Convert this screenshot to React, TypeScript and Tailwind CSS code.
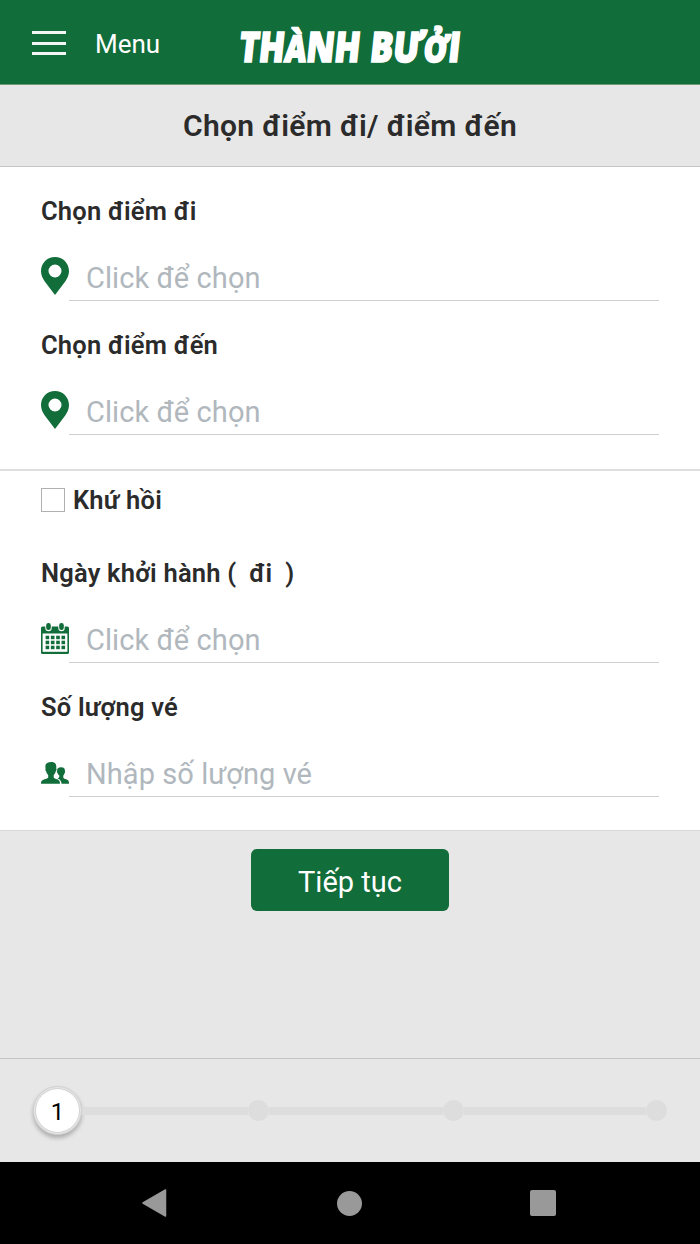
import type { ReactNode } from "react";

function PinIcon() {
  return (
    <svg width="28" height="38" viewBox="0 0 28 38" className="mb-px block">
      <path
        fillRule="evenodd"
        fill="#116d39"
        d="M14 0C6.200 0 0 6.200 0 14c0 4 1.500 7 3.600 10.200L14 38l10.400-13.800C26.500 21 28 18 28 14 28 6.200 21.800 0 14 0Zm0 7.500a6.500 6.500 0 1 1 0 13 6.500 6.500 0 0 1 0-13Z"
      />
    </svg>
  );
}

function CalendarIcon() {
  const columns = [4.600, 9.900, 15.200, 20.500];
  const rows = [12.700, 17.700, 22.700];
  return (
    <svg width="28" height="32" viewBox="0 0 28 32" className="mt-px block">
      <rect x="0" y="3.500" width="28" height="27.500" rx="1.600" fill="#116d39" />
      <rect x="1.600" y="10.500" width="24.800" height="18.300" fill="#fff" />
      <rect x="4.300" y="-1" width="6.400" height="9.200" rx="3.200" fill="#fff" />
      <rect x="17.300" y="-1" width="6.400" height="9.200" rx="3.200" fill="#fff" />
      <rect x="5.200" y="0" width="4.600" height="7" rx="2.200" fill="#116d39" />
      <rect x="18.200" y="0" width="4.600" height="7" rx="2.200" fill="#116d39" />
      {rows.map((y) =>
        columns.map((x) => (
          <rect key={`${x}-${y}`} x={x} y={y} width="3.600" height="3.500" fill="#116d39" />
        )),
      )}
    </svg>
  );
}

function PeopleIcon() {
  return (
    <svg width="28" height="22" viewBox="0 0 28 22" className="block">
      <g fill="#116d39">
        <path d="M5 2C6 .7 7.800 0 10 0c3.200 0 5.400 1.300 5.300 4.500v2c.5 .8 .2 2.400-.6 2.900-.3 1.500-1 2.700-2 3.600v2.400c.6 1.300 4.300 1.600 5.400 3 .6 .8 .9 1.800 .9 3.300H0c0-1.600 .2-2.600 1.200-3.300 1.500-1.200 5.400-1.700 6-3V13c-1-.9-1.700-2.100-2-3.600-.8-.5-1.100-2.100-.6-2.900-.3-1.600-.4-3.300 .4-4.500Z" />
        <path d="M16.500 11c-.7-.4-.8-1.700-.3-2.200-.2-2.400 .8-3.600 3.800-3.600 2.700 0 4.100 1.100 3.900 3.600 .5 .5 .3 1.800-.3 2.200-.2 1.100-.7 1.900-1.300 2.500v2.300c1 1.600 4.600 1.500 5.200 3.100 .4 .7 .5 2 .5 2.800h-7.400c-.2-2.900-1.500-4.300-4-5.300 1.200-.5 1.700-1.100 1.700-1.900v-1c-.8-.6-1.500-1.400-1.800-2.500Z" />
      </g>
    </svg>
  );
}

function Logo() {
  return (
    <svg
      width="240"
      height="84"
      viewBox="0 0 240 84"
      className="block font-['Open_Sans',sans-serif] text-[42px] font-extrabold"
      fill="#fff"
      stroke="#fff"
      strokeWidth="1.700"
    >
      <g transform="translate(4 62) skewX(-6)">
        <text x="0" y="0" textLength="121" lengthAdjust="spacingAndGlyphs">
          TH<tspan className="text-[37px]">À</tspan>NH
        </text>
        <text x="131" y="0" textLength="90" lengthAdjust="spacingAndGlyphs">
          BƯ<tspan className="text-[36px]">Ở</tspan>I
        </text>
      </g>
    </svg>
  );
}

function Label({ children }: { children: ReactNode }) {
  return (
    <div className="h-[30px] whitespace-pre text-[25.500px] leading-[30px] font-semibold tracking-[0.200px]">
      {children}
    </div>
  );
}

function Field({ label, placeholder, icon }: { label: string; placeholder: string; icon: ReactNode }) {
  return (
    <div>
      <Label>{label}</Label>
      <div className="mt-[19px] flex h-[56px]">
        <div className="flex w-7 shrink-0 items-center pt-[7px]">{icon}</div>
        <div className="flex-1 border-b border-[#cfcfcf] pl-[17px] text-[29px] leading-[66px] tracking-[0.07px] text-[#b0b7bd]">
          {placeholder}
        </div>
      </div>
    </div>
  );
}

export default function App() {
  return (
    <div className="flex h-[1244px] w-[700px] flex-col overflow-hidden bg-[#e7e7e7] font-[Roboto,sans-serif] text-[#2b2b2b]">
      <header className="flex h-[85px] shrink-0 border-b border-[#6e9a78] bg-[#116d39] pl-8 text-white">
        <div className="mt-[31px] flex h-[24px] w-[34px] flex-col justify-between self-start">
          <div className="h-[3px] bg-white/95" />
          <div className="h-[3px] bg-white/95" />
          <div className="h-[3px] bg-white/95" />
        </div>
        <div className="ml-[29px] w-[139px] pt-[2px] text-[26px] leading-[84px]">Menu</div>
        <Logo />
      </header>

      <h1 className="h-[82px] shrink-0 border-b border-[#c4c4c4] text-center text-[30px] leading-[82px] font-semibold tracking-[0.33px]">
        Chọn điểm đi/ điểm đến
      </h1>

      <section className="flex h-[304px] shrink-0 flex-col gap-[29px] border-b-2 border-[#dedede] bg-white px-[41px] pt-[29px]">
        <Field label="Chọn điểm đi" placeholder="Click để chọn" icon={<PinIcon />} />
        <Field label="Chọn điểm đến" placeholder="Click để chọn" icon={<PinIcon />} />
      </section>

      <section className="flex h-[360px] shrink-0 flex-col border-b border-[#d8d8d8] bg-white px-[41px] pt-[14px]">
        <div className="flex items-center gap-2">
          <div className="size-6 border border-[#b0b0b0] bg-white" />
          <Label>Khứ hồi</Label>
        </div>
        <div className="mt-[43px] flex flex-col gap-[29px]">
          <Field label="Ngày khởi hành (  đi  )" placeholder="Click để chọn" icon={<CalendarIcon />} />
          <Field label="Số lượng vé" placeholder="Nhập số lượng vé" icon={<PeopleIcon />} />
        </div>
      </section>

      <div className="flex flex-1 justify-center pt-[18px]">
        <button className="h-[62px] w-[198px] rounded-md bg-[#116d39] text-[29px] leading-[66px] text-white">
          Tiếp tục
        </button>
      </div>

      <div className="flex h-[104px] shrink-0 items-center border-t border-[#c4c4c4] pl-[33px]">
        <div className="flex size-[49px] shrink-0 items-center justify-center rounded-full border border-[#d0d0d0] bg-[#e7e7e7] shadow-[0_3px_4px_rgba(0,0,0,0.25)]">
          <div className="flex size-[43px] items-center justify-center rounded-full bg-white pt-[3px] text-[24px] text-black ring-1 ring-[#d4d4d4]">
            1
          </div>
        </div>
        <div className="h-2 w-[166px] bg-[#dddddd]" />
        <div className="size-[21px] rounded-full bg-[#dddddd]" />
        <div className="h-2 w-[174px] bg-[#dddddd]" />
        <div className="size-[21px] rounded-full bg-[#dddddd]" />
        <div className="h-2 w-[182px] bg-[#dddddd]" />
        <div className="size-[21px] rounded-full bg-[#dddddd]" />
      </div>

      <nav className="flex h-[82px] shrink-0 items-center bg-black pl-[142px]">
        <svg width="25" height="28" viewBox="0 0 25 28" className="block">
          <path d="M1 14 23.500 1v26Z" fill="#999" stroke="#999" strokeWidth="1.500" strokeLinejoin="round" />
        </svg>
        <div className="ml-[170px] size-[25px] rounded-full bg-[#999999]" />
        <div className="ml-[168px] size-[26px] rounded-[2px] bg-[#999999]" />
      </nav>
    </div>
  );
}
